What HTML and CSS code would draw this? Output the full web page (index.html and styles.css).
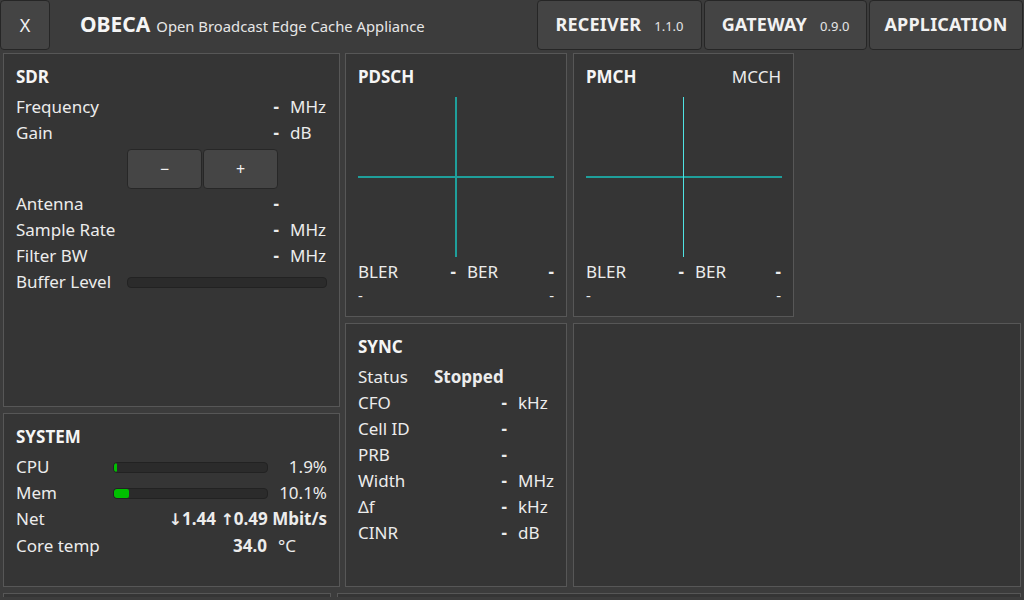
FILE: index.html
```html
<!DOCTYPE html>
<html lang="en">
<head>
<meta charset="utf-8">
<title>OBECA</title>
<link rel="stylesheet" href="styles.css">
</head>
<body>
<header class="topbar">
  <button class="close-btn">X</button>
  <div class="brand">
    <span class="brand-name">OBECA</span>
    <span class="brand-sub">Open Broadcast Edge Cache Appliance</span>
  </div>
  <nav class="tabs">
    <button class="tab"><span class="tab-name">RECEIVER</span><span class="tab-ver">1.1.0</span></button>
    <button class="tab"><span class="tab-name">GATEWAY</span><span class="tab-ver">0.9.0</span></button>
    <button class="tab"><span class="tab-name">APPLICATION</span></button>
  </nav>
</header>

<main class="dash">
  <div class="upper">
    <div class="col-left">
      <section class="panel sdr">
        <h2 class="panel-title">SDR</h2>
        <div class="kv sdr-grid">
          <span class="lbl">Frequency</span><span class="val">-</span><span class="unit">MHz</span>
          <span class="lbl">Gain</span><span class="val">-</span><span class="unit">dB</span>
          <div class="gain-btns"><button class="small-btn">&minus;</button><button class="small-btn">+</button></div>
          <span class="lbl">Antenna</span><span class="val">-</span><span class="unit"></span>
          <span class="lbl">Sample Rate</span><span class="val">-</span><span class="unit">MHz</span>
          <span class="lbl">Filter BW</span><span class="val">-</span><span class="unit">MHz</span>
          <span class="lbl">Buffer Level</span><div class="bar buffer-bar"><div class="bar-fill" style="width:0%"></div></div>
        </div>
      </section>
      <section class="panel system">
        <h2 class="panel-title">SYSTEM</h2>
        <div class="sys-grid">
          <span class="lbl">CPU</span><div class="bar"><div class="bar-fill" style="width:1.9%"></div></div><span class="sval">1.9%</span>
          <span class="lbl">Mem</span><div class="bar"><div class="bar-fill" style="width:10.1%"></div></div><span class="sval">10.1%</span>
          <span class="lbl">Net</span><span class="net"><span class="arrow">↓</span>1.44 <span class="arrow">↑</span>0.49 Mbit/s</span>
          <span class="lbl">Core temp</span><span class="temp">34.0</span><span class="temp-unit">°C</span>
        </div>
      </section>
    </div>

    <div class="col-right">
      <section class="panel chart pdsch">
        <div class="chart-head"><h2 class="panel-title">PDSCH</h2></div>
        <svg class="plot" width="196" height="160" viewBox="0 0 196 160">
          <line x1="0" y1="80" x2="196" y2="80" stroke="#1f9f9b" stroke-width="2"/>
          <line x1="98" y1="0" x2="98" y2="160" stroke="#1f9f9b" stroke-width="2"/>
        </svg>
        <div class="err-row">
          <div class="err"><span>BLER</span><span class="err-val">-</span></div>
          <div class="err"><span>BER</span><span class="err-val">-</span></div>
        </div>
        <div class="sub-row"><span>-</span><span>-</span></div>
      </section>

      <section class="panel chart pmch">
        <div class="chart-head"><h2 class="panel-title">PMCH</h2><span class="chart-mode">MCCH</span></div>
        <svg class="plot" width="196" height="160" viewBox="0 0 196 160">
          <line x1="0" y1="80" x2="196" y2="80" stroke="#1f9f9b" stroke-width="2"/>
          <line x1="97.5" y1="0" x2="97.5" y2="160" stroke="#4fe3e3" stroke-width="1"/>
        </svg>
        <div class="err-row">
          <div class="err"><span>BLER</span><span class="err-val">-</span></div>
          <div class="err"><span>BER</span><span class="err-val">-</span></div>
        </div>
        <div class="sub-row"><span>-</span><span>-</span></div>
      </section>

      <section class="panel sync">
        <h2 class="panel-title">SYNC</h2>
        <div class="kv sync-grid">
          <span class="lbl">Status</span><span class="status">Stopped</span><span class="unit"></span>
          <span class="lbl">CFO</span><span class="val">-</span><span class="unit">kHz</span>
          <span class="lbl">Cell ID</span><span class="val">-</span><span class="unit"></span>
          <span class="lbl">PRB</span><span class="val">-</span><span class="unit"></span>
          <span class="lbl">Width</span><span class="val">-</span><span class="unit">MHz</span>
          <span class="lbl">Δf</span><span class="val">-</span><span class="unit">kHz</span>
          <span class="lbl">CINR</span><span class="val">-</span><span class="unit">dB</span>
        </div>
      </section>

      <section class="panel empty-panel"></section>
    </div>
  </div>

  <div class="lower">
    <section class="panel lower-left"></section>
    <section class="panel lower-right"></section>
  </div>
</main>
</body>
</html>
```

FILE: styles.css
```css
* { box-sizing: border-box; }

html, body {
  margin: 0;
  padding: 0;
}

body {
  width: 1024px;
  height: 600px;
  overflow: hidden;
  background: #3c3c3c;
  color: #ececec;
  font-family: "Noto Sans", "Open Sans", sans-serif;
  font-size: 17px;
}

button {
  font-family: inherit;
  color: #f2f2f2;
  cursor: pointer;
}

/* ---------- top bar ---------- */
.topbar {
  height: 50px;
  display: flex;
  align-items: stretch;
}

.close-btn {
  width: 50px;
  height: 50px;
  background: #444444;
  border: 1px solid #262626;
  border-radius: 4px;
  font-size: 18px;
  padding: 0;
}

.brand {
  display: flex;
  align-items: baseline;
  padding-left: 30px;
  padding-top: 10px;
  gap: 6px;
}

.brand-name {
  font-size: 21px;
  font-weight: 700;
  color: #f5f5f5;
}

.brand-sub {
  font-size: 14.8px;
  color: #e6e6e6;
}

.tabs {
  margin-left: auto;
  margin-right: 1px;
  display: flex;
  gap: 2px;
}

.tab {
  height: 50px;
  background: #444444;
  border: 1px solid #262626;
  border-radius: 4px;
  display: flex;
  align-items: baseline;
  justify-content: center;
  padding: 11px 16px 0;
  gap: 13px;
}

.tab:nth-child(1) { width: 165px; }
.tab:nth-child(2) { width: 163px; }
.tab:nth-child(3) { width: 154px; }

.tab-name {
  font-size: 18px;
  font-weight: 700;
  letter-spacing: 0.2px;
}

.tab-ver {
  font-size: 13px;
  color: #e6e6e6;
}

/* ---------- dashboard ---------- */
.dash {
  padding: 3px 3px 0;
}

.upper {
  display: flex;
  gap: 5px;
  height: 534px;
}

.col-left {
  width: 337px;
  display: flex;
  flex-direction: column;
  gap: 6px;
}

.col-right {
  flex: 1;
  display: grid;
  grid-template-columns: 222px 221px 1fr;
  grid-template-rows: 264px 264px;
  gap: 6px;
}

.pdsch { grid-column: 1; grid-row: 1; }
.pmch { grid-column: 2; grid-row: 1; }
.sync { grid-column: 1; grid-row: 2; }
.empty-panel { grid-column: 2 / 4; grid-row: 2; }

.panel {
  background: #353535;
  border: 1px solid #575757;
  padding: 10px 12px 0;
}

.panel-title {
  margin: 0 0 4px;
  font-size: 17px;
  font-weight: 700;
  line-height: 26px;
  color: #f5f5f5;
}

.sdr { height: 354px; }
.system { height: 174px; }

/* key/value grids */
.kv {
  display: grid;
  line-height: 26px;
}

.kv .lbl { grid-column: 1; }

.sdr-grid {
  grid-template-columns: 111px 1fr 48px;
}

.lbl { white-space: nowrap; }

.val {
  text-align: right;
  font-weight: 700;
}

.unit {
  padding-left: 11px;
}

.gain-btns {
  grid-column: 2 / 3;
  justify-self: end;
  display: flex;
  gap: 1px;
  margin: 3px 1px 2px 0;
}

.small-btn {
  width: 75px;
  height: 40px;
  background: #454545;
  border: 1px solid #272727;
  border-radius: 4px;
  font-size: 16px;
  padding: 0;
}

.bar {
  height: 11px;
  background: #2b2b2b;
  border: 1px solid #222222;
  border-radius: 4px;
  align-self: center;
  overflow: hidden;
}

.buffer-bar {
  grid-column: 2 / 4;
}

.bar-fill {
  height: 100%;
  background: #00c000;
  border-radius: 2px;
}

/* system */
.sys-grid {
  display: grid;
  grid-template-columns: 97px 1fr 59px;
  line-height: 26px;
}

.sval { text-align: right; }

.net {
  grid-column: 2 / 4;
  text-align: right;
  font-weight: 700;
}

.arrow {
  font-family: "DejaVu Sans", sans-serif;
  font-size: 16px;
}

.temp {
  text-align: right;
  font-weight: 700;
  padding-right: 1px;
}

.temp-unit {
  padding-left: 10px;
}

/* charts */
.chart-head {
  display: flex;
  justify-content: space-between;
  align-items: baseline;
}

.chart-mode {
  font-size: 17px;
  line-height: 26px;
}

.plot {
  display: block;
  margin-top: 3px;
}

.err-row {
  display: grid;
  grid-template-columns: 98px 1fr;
  column-gap: 11px;
  line-height: 26px;
  margin-top: 2px;
}

.err {
  display: flex;
  justify-content: space-between;
}

.err-val { font-weight: 700; }

.sub-row {
  display: flex;
  justify-content: space-between;
  font-size: 15px;
  line-height: 16px;
  margin-top: 2px;
}

/* sync */
.sync-grid {
  grid-template-columns: 76px 73px 1fr;
}

.status {
  font-weight: 700;
  white-space: nowrap;
}

/* lower */
.lower {
  display: flex;
  gap: 6px;
  margin-top: 6px;
  height: 4px;
}

.lower .panel {
  border-bottom: none;
  padding: 0;
}

.lower-left { width: 328px; }
.lower-right { flex: 1; }
```
